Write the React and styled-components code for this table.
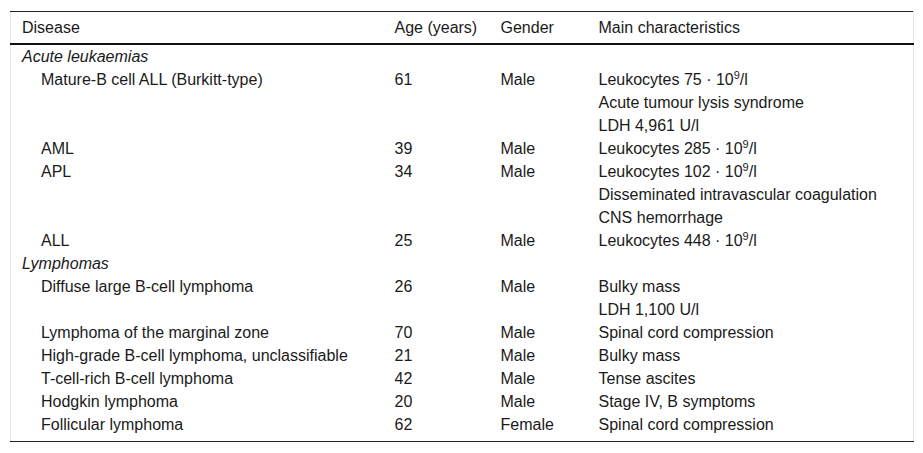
import React from "react";
import styled, { createGlobalStyle } from "styled-components";

const GlobalStyle = createGlobalStyle`
  body {
    margin: 0;
    background: #fff;
    font-family: "Liberation Sans", Arial, sans-serif;
    color: #1a1a1a;
  }
`;

const groups = [
  {
    title: "Acute leukaemias",
    rows: [
      { disease: "Mature-B cell ALL (Burkitt-type)", age: "61", gender: "Male", notes: [["Leukocytes 75"], "Acute tumour lysis syndrome", "LDH 4,961 U/l"] },
      { disease: "AML", age: "39", gender: "Male", notes: [["Leukocytes 285"]] },
      { disease: "APL", age: "34", gender: "Male", notes: [["Leukocytes 102"], "Disseminated intravascular coagulation", "CNS hemorrhage"] },
      { disease: "ALL", age: "25", gender: "Male", notes: [["Leukocytes 448"]] },
    ],
  },
  {
    title: "Lymphomas",
    rows: [
      { disease: "Diffuse large B-cell lymphoma", age: "26", gender: "Male", notes: ["Bulky mass", "LDH 1,100 U/l"] },
      { disease: "Lymphoma of the marginal zone", age: "70", gender: "Male", notes: ["Spinal cord compression"] },
      { disease: "High-grade B-cell lymphoma, unclassifiable", age: "21", gender: "Male", notes: ["Bulky mass"] },
      { disease: "T-cell-rich B-cell lymphoma", age: "42", gender: "Male", notes: ["Tense ascites"] },
      { disease: "Hodgkin lymphoma", age: "20", gender: "Male", notes: ["Stage IV, B symptoms"] },
      { disease: "Follicular lymphoma", age: "62", gender: "Female", notes: ["Spinal cord compression"] },
    ],
  },
];

const Frame = styled.div`
  padding: 11px 10px 0 10px;
`;

const Table = styled.table`
  width: 903px;
  table-layout: fixed;
  border-collapse: collapse;
  border-left: 1px solid #e4e4e4;
  border-right: 1px solid #e4e4e4;
  border-top: 1px solid #222;
  border-bottom: 1px solid #222;
  font-size: 16px;
  line-height: 23px;
`;

const Col = styled.col`
  width: ${(p) => p.$w};
`;

const HeadRow = styled.tr`
  border-bottom: 2px solid #111;
`;

const Th = styled.th`
  text-align: left;
  font-weight: normal;
  padding: 4px 11px 4px 11px;
  height: 23px;
`;

const Td = styled.td`
  padding: 0 11px 0 ${(p) => (p.$indent ? "30px" : "11px")};
  vertical-align: top;
  white-space: nowrap;
`;

const GroupCell = styled.td`
  padding: 0 11px;
  font-style: italic;
`;

const BodyRow = styled.tr`
  td {
    padding-bottom: ${(p) => (p.$last ? "5px" : "0")};
  }
`;

const Line = styled.div``;

const Sup = styled.sup`
  font-size: 11px;
  line-height: 0;
  vertical-align: 6px;
`;

const Note = ({ value }) =>
  Array.isArray(value) ? (
    <Line>
      {value[0]} · 10<Sup>9</Sup>/l
    </Line>
  ) : (
    <Line>{value}</Line>
  );

export default function App() {
  return (
    <>
      <GlobalStyle />
      <Frame>
        <Table>
          <colgroup>
            <Col $w="373px" />
            <Col $w="106px" />
            <Col $w="98px" />
            <Col $w="326px" />
          </colgroup>
          <thead>
            <HeadRow>
              <Th>Disease</Th>
              <Th>Age (years)</Th>
              <Th>Gender</Th>
              <Th>Main characteristics</Th>
            </HeadRow>
          </thead>
          <tbody>
            {groups.map((g, gi) => (
              <React.Fragment key={g.title}>
                <tr>
                  <GroupCell colSpan={4}>{g.title}</GroupCell>
                </tr>
                {g.rows.map((r, ri) => (
                  <BodyRow key={r.disease} $last={gi === groups.length - 1 && ri === g.rows.length - 1}>
                    <Td $indent>{r.disease}</Td>
                    <Td>{r.age}</Td>
                    <Td>{r.gender}</Td>
                    <Td>
                      {r.notes.map((n, i) => (
                        <Note key={i} value={n} />
                      ))}
                    </Td>
                  </BodyRow>
                ))}
              </React.Fragment>
            ))}
          </tbody>
        </Table>
      </Frame>
    </>
  );
}
